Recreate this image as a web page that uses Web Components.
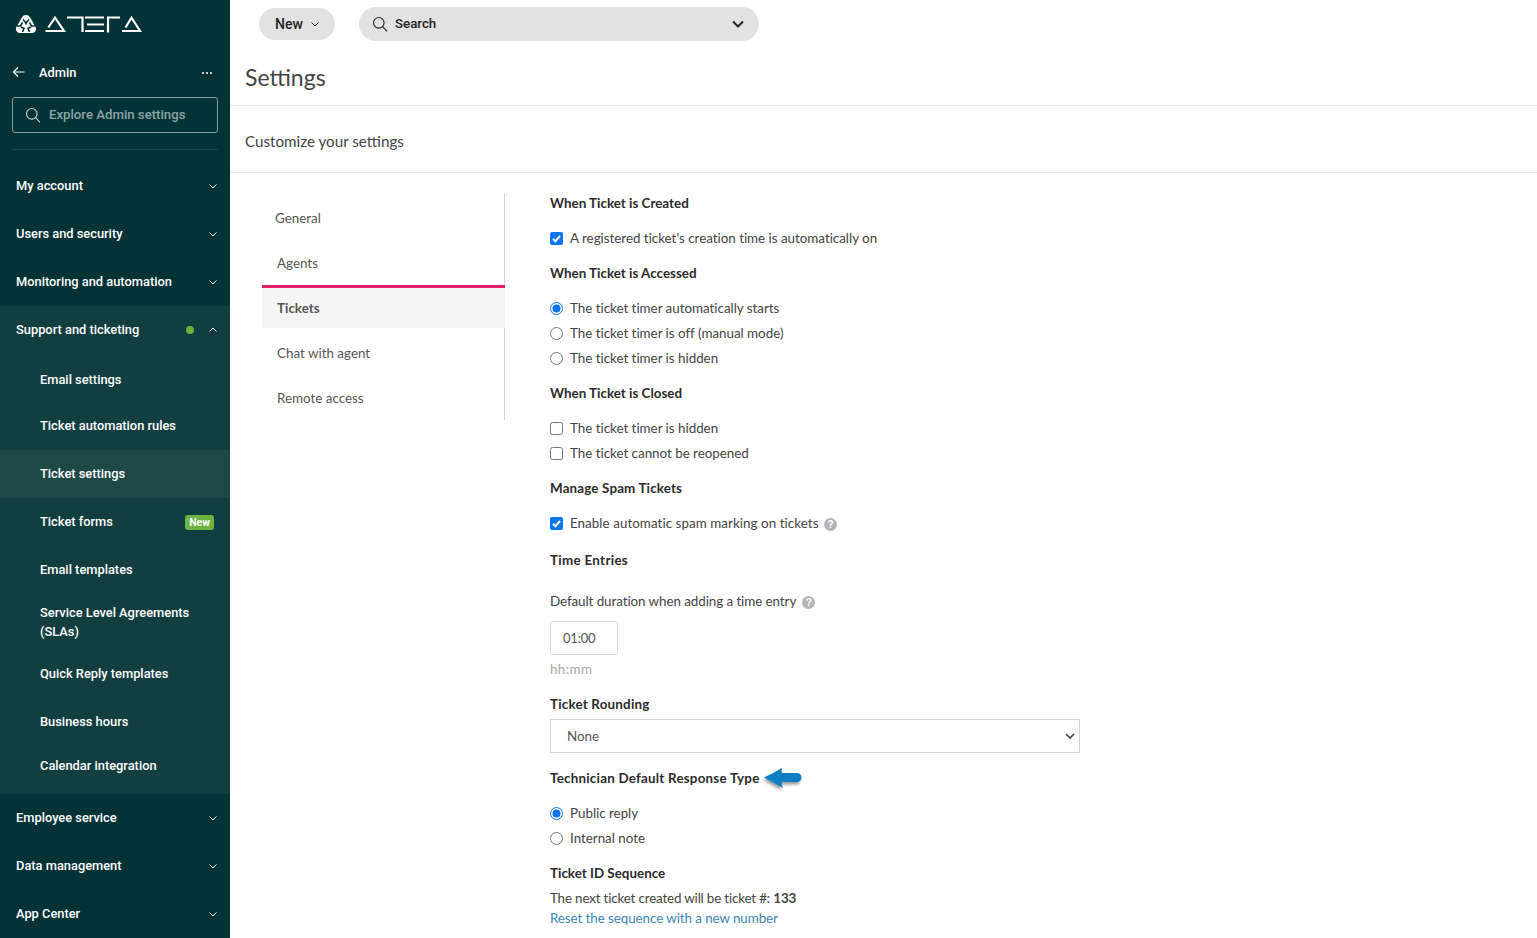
<!DOCTYPE html>
<html>
<head>
<meta charset="utf-8">
<title>Settings</title>
<style>
  html, body { margin: 0; height: 938px; overflow: hidden; background: #fff; }
  body { display: flex; font-family: "Lato", "Noto Sans", sans-serif; }
</style>
</head>
<body>
<admin-sidebar></admin-sidebar>
<settings-page></settings-page>

<script>
const chevronDown = `<svg width="10" height="10" viewBox="0 0 10 10" fill="none" stroke="currentColor" stroke-width="1"><path d="M1.5 3.500 5 7l3.500-3.500"/></svg>`;
const chevronUp = `<svg width="10" height="10" viewBox="0 0 10 10" fill="none" stroke="currentColor" stroke-width="1"><path d="M1.500 6.500 5 3l3.500 3.500"/></svg>`;
const searchIcon = `<svg width="16" height="16" viewBox="0 0 16 16" fill="none" stroke="currentColor" stroke-width="1.1"><circle cx="6.8" cy="6.8" r="5.3"/><path d="m10.700 10.700 4.300 4.600"/></svg>`;

class NavGroup extends HTMLElement {
  constructor() {
    super();
    this.attachShadow({mode: "open"});
  }
  connectedCallback() {
    const open = this.hasAttribute("open");
    this.shadowRoot.innerHTML = `
      <style>
        :host { display: block; }
        .head { height: 48px; display: flex; align-items: center; padding: 0 12px 0 16px; color: #fff; font: 500 12.85px/18px Roboto, sans-serif; }
        .label { flex: 1; }
        .dot { width: 8px; height: 8px; border-radius: 50%; background: #6cb33f; margin-right: 14px; }
        svg { display: block; }
      </style>
      <div class="head">
        <span class="label">${this.getAttribute("label")}</span>
        ${this.hasAttribute("dot") ? '<span class="dot"></span>' : ''}
        ${open ? chevronUp : chevronDown}
      </div>
      <slot></slot>`;
  }
}
customElements.define("nav-group", NavGroup);

class NavItem extends HTMLElement {
  constructor() {
    super();
    this.attachShadow({mode: "open"});
  }
  connectedCallback() {
    const h = this.getAttribute("height") || 48;
    const pb = this.getAttribute("pb") || 2;
    this.shadowRoot.innerHTML = `
      <style>
        :host { display: flex; align-items: center; height: ${h}px; padding: 0 16px ${pb}px 40px; color: #fff; font: 500 12.85px/19px Roboto, sans-serif; box-sizing: border-box; }
        :host([active]) { background: #1f4848; }
        .text { flex: 1; }
        .badge { background: #6cb33f; color: #fff; font: 700 10.5px/15px Roboto, sans-serif; padding: 0 4px; border-radius: 3px; margin-top: 2px; }
      </style>
      <span class="text"><slot></slot></span>
      ${this.hasAttribute("badge") ? `<span class="badge">${this.getAttribute("badge")}</span>` : ''}`;
  }
}
customElements.define("nav-item", NavItem);

class AdminSidebar extends HTMLElement {
  constructor() {
    super();
    this.attachShadow({mode: "open"});
    this.shadowRoot.innerHTML = `
      <style>
        :host { display: block; width: 230px; height: 938px; flex: none; background: #033237; color: #fff; overflow: hidden; }
        .logo { height: 48px; display: flex; align-items: center; padding-left: 15px; }
        .admin { height: 48px; display: flex; align-items: center; padding: 0 18px 0 12px; font: 500 12.85px Roboto, sans-serif; }
        .admin .name { flex: 1; margin-left: 13px; }
        .dots { display: flex; gap: 2px; margin-top: 2px; }
        .dots i { width: 2px; height: 2px; border-radius: 50%; background: #fff; }
        .explore { margin: 1px 12px 0; height: 36px; box-sizing: border-box; border: 1px solid #7f9d9d; border-radius: 3px; display: flex; align-items: center; gap: 8px; padding: 0 0 1px 12px; color: #8ba5a6; font: 500 13.2px Roboto, sans-serif; }
        .explore svg { color: #c5d2d2; }
        hr { border: 0; border-top: 1px solid #1c4a4c; margin: 16px 12px 12px; }
        .open { background: #123e41; padding-bottom: 8px; }
      </style>
      <div class="logo">
        <svg width="128" height="20" viewBox="0 0 128 20">
          <path d="M11 1a4.500 4.500 0 0 1 4 2.300l5.600 9.600A4 4 0 0 1 17 19H5a4 4 0 0 1-3.600-6.100L7 3.300A4.500 4.500 0 0 1 11 1z" fill="#fff"/>
          <g fill="none" stroke="#033237" stroke-width="1.6">
            <path d="M8 5.500 11 9l3-3.500"/>
            <path d="M11 9v1.500"/>
            <path d="M7.500 8.500 5.500 12H2"/>
            <path d="M14.500 8.500l2 3.500H20"/>
            <path d="M7.500 18 9 14.500 6 13"/>
            <path d="M14.500 18 13 14.500l3-1.500"/>
          </g>
          <g fill="none" stroke="#fff" stroke-width="2.200">
            <path d="M30.500 17H49L40 3.700 33.300 13.500"/>
            <path d="M52 3.500h15.500V18"/>
            <path d="M70 3.500h19M72 10.500h17M70 17h19"/>
            <path d="M93 18.500V3.500h12"/>
            <path d="M107 17h18L116.500 3.700 110.500 13.500"/>
          </g>
        </svg>
      </div>
      <div class="admin">
        <svg width="14" height="12" viewBox="0 0 14 12" fill="none" stroke="#fff" stroke-width="1.2"><path d="M12.500 6H1.500M6 1.500 1.500 6 6 10.500"/></svg>
        <span class="name">Admin</span>
        <span class="dots"><i></i><i></i><i></i></span>
      </div>
      <div class="explore">${searchIcon}<span>Explore Admin settings</span></div>
      <hr>
      <nav-group label="My account"></nav-group>
      <nav-group label="Users and security"></nav-group>
      <nav-group label="Monitoring and automation"></nav-group>
      <div class="open">
        <nav-group label="Support and ticketing" open dot>
          <nav-item height="50" pb="0">Email settings</nav-item>
          <nav-item height="46" pb="4">Ticket automation rules</nav-item>
          <nav-item active>Ticket settings</nav-item>
          <nav-item badge="New">Ticket forms</nav-item>
          <nav-item>Email templates</nav-item>
          <nav-item height="57" pb="1">Service Level Agreements (SLAs)</nav-item>
          <nav-item height="45" pb="1">Quick Reply templates</nav-item>
          <nav-item height="50" pb="0">Business hours</nav-item>
          <nav-item height="40">Calendar integration</nav-item>
        </nav-group>
      </div>
      <nav-group label="Employee service"></nav-group>
      <nav-group label="Data management"></nav-group>
      <nav-group label="App Center"></nav-group>`;
  }
}
customElements.define("admin-sidebar", AdminSidebar);

class TopBar extends HTMLElement {
  constructor() {
    super();
    this.attachShadow({mode: "open"});
    this.shadowRoot.innerHTML = `
      <style>
        :host { display: flex; align-items: center; height: 48px; padding-left: 29px; gap: 24px; font: 500 14px Roboto, sans-serif; color: #222; }
        .pill { background: #e2e2e2; display: flex; align-items: center; box-sizing: border-box; }
        .new { width: 76px; height: 32px; border-radius: 16px; padding-left: 16px; gap: 7px; }
        .search { width: 400px; height: 34px; border-radius: 17px; padding: 0 14px 0 13px; gap: 7px; font-size: 13.3px; }
        .search span { flex: 1; padding-bottom: 1px; }
        svg { display: block; }
      </style>
      <div class="pill new"><span>New</span>${chevronDown}</div>
      <div class="pill search">${searchIcon}<span>Search</span>
        <svg width="14" height="14" viewBox="0 0 14 14" fill="none" stroke="#222" stroke-width="2"><path d="m2 4.500 5 5 5-5"/></svg>
      </div>`;
  }
}
customElements.define("top-bar", TopBar);

class SideTabs extends HTMLElement {
  constructor() {
    super();
    this.attachShadow({mode: "open"});
    this.shadowRoot.innerHTML = `
      <style>
        :host { display: block; width: 243px; height: 227px; flex: none; box-sizing: border-box; border-right: 1px solid #d3d3d3; margin-left: 32px; font-size: 13.4px; color: #555; }
        div { display: flex; align-items: center; padding-left: 15px; box-sizing: border-box; }
        .general { height: 50px; padding-left: 13px; }
        .agents { height: 42px; padding-bottom: 2px; }
        .active { height: 43px; background: #f5f5f5; border-top: 3px solid #e6206f; margin-right: -1px; font-weight: 700; }
        .chat { height: 50px; }
        .remote { height: 40px; }
      </style>
      <div class="general">General</div>
      <div class="agents">Agents</div>
      <div class="active">Tickets</div>
      <div class="chat">Chat with agent</div>
      <div class="remote">Remote access</div>`;
  }
}
customElements.define("side-tabs", SideTabs);

class OptionRow extends HTMLElement {
  constructor() {
    super();
    this.attachShadow({mode: "open"});
  }
  connectedCallback() {
    const type = this.getAttribute("type");
    const on = this.hasAttribute("checked");
    let box;
    if (type === "radio") {
      box = on
        ? `<svg width="13" height="13" viewBox="0 0 13 13"><circle cx="6.500" cy="6.500" r="6" fill="#fff" stroke="#0b76ef"/><circle cx="6.500" cy="6.500" r="4" fill="#0b76ef"/></svg>`
        : `<svg width="13" height="13" viewBox="0 0 13 13"><circle cx="6.500" cy="6.500" r="6" fill="#fff" stroke="#767676"/></svg>`;
    } else {
      box = on
        ? `<svg width="13" height="13" viewBox="0 0 13 13"><rect width="13" height="13" rx="2" fill="#0b76ef"/><path d="m3 6.800 2.400 2.400L10 4" fill="none" stroke="#fff" stroke-width="2"/></svg>`
        : `<svg width="13" height="13" viewBox="0 0 13 13"><rect x=".5" y=".5" width="12" height="12" rx="2" fill="#fff" stroke="#767676"/></svg>`;
    }
    this.shadowRoot.innerHTML = `
      <style>
        :host { display: flex; align-items: center; gap: 7px; height: 25px; font-size: 13.4px; letter-spacing: -.02px; color: #444; }
        svg { display: block; flex: none; margin-top: 1px; }
      </style>
      ${box}<span><slot></slot></span>`;
  }
}
customElements.define("option-row", OptionRow);

class HelpDot extends HTMLElement {
  constructor() {
    super();
    this.attachShadow({mode: "open"});
    this.shadowRoot.innerHTML = `
      <style>
        :host { display: inline-flex; width: 13px; height: 13px; border-radius: 50%; background: #b5b5b5; color: #fff; font: 700 10px/13px "Liberation Sans", sans-serif; letter-spacing: 0; justify-content: center; margin-left: 2px; vertical-align: 0; }
      </style>?`;
  }
}
customElements.define("help-dot", HelpDot);

class SectionTitle extends HTMLElement {
  constructor() {
    super();
    this.attachShadow({mode: "open"});
    this.shadowRoot.innerHTML = `
      <style>
        :host { display: flex; align-items: center; height: 20px; font-size: 13.4px; line-height: 20px; font-weight: 700; color: #2b2b2b; }
      </style>
      <slot></slot>`;
  }
}
customElements.define("section-title", SectionTitle);

class TicketForm extends HTMLElement {
  constructor() {
    super();
    this.attachShadow({mode: "open"});
    this.shadowRoot.innerHTML = `
      <style>
        :host { display: block; flex: 1; margin-left: 45px; font-size: 13.4px; color: #444; }
        .plain { display: block; height: 20px; line-height: 20px; }
        .time { width: 68px; height: 34px; box-sizing: border-box; border: 1px solid #d6d6d6; border-radius: 3px; padding-left: 12px; display: flex; align-items: center; margin-top: 10px; color: #555; font-size: 13px; letter-spacing: -.2px; }
        .hint { color: #a8a8a8; margin-top: 4px; line-height: 20px; letter-spacing: .4px; }
        .select { width: 530px; height: 34px; box-sizing: border-box; border: 1px solid #d2d2d2; display: flex; align-items: center; justify-content: space-between; padding: 0 4px 0 16px; color: #555; margin-top: 5px; }
        a { color: #3b87b5; text-decoration: none; line-height: 20px; display: block; letter-spacing: -.08px; }
      </style>
      <section-title>When Ticket is Created</section-title>
      <option-row type="checkbox" checked style="margin-top:12px">A registered ticket's creation time is automatically on</option-row>
      <section-title style="margin-top:13px">When Ticket is Accessed</section-title>
      <option-row type="radio" checked style="margin-top:12px">The ticket timer automatically starts</option-row>
      <option-row type="radio">The ticket timer is off (manual mode)</option-row>
      <option-row type="radio">The ticket timer is hidden</option-row>
      <section-title style="margin-top:13px">When Ticket is Closed</section-title>
      <option-row type="checkbox" style="margin-top:12px">The ticket timer is hidden</option-row>
      <option-row type="checkbox">The ticket cannot be reopened</option-row>
      <section-title style="margin-top:13px;letter-spacing:.15px">Manage Spam Tickets</section-title>
      <option-row type="checkbox" checked style="margin-top:12px;letter-spacing:.05px">Enable automatic spam marking on tickets <help-dot></help-dot></option-row>
      <section-title style="margin-top:15px;letter-spacing:.3px">Time Entries</section-title>
      <div class="plain" style="margin-top:21px;letter-spacing:-.07px">Default duration when adding a time entry <help-dot style="margin-left:3px"></help-dot></div>
      <div class="time">01:00</div>
      <div class="hint">hh:mm</div>
      <section-title style="margin-top:15px;letter-spacing:.2px">Ticket Rounding</section-title>
      <div class="select"><span>None</span>
        <svg width="10" height="7" viewBox="0 0 10 7" fill="none" stroke="#444" stroke-width="1.6"><path d="m1 1 4 4 4-4"/></svg>
      </div>
      <section-title style="margin-top:15px;letter-spacing:.22px">Technician Default Response Type
        <svg width="38" height="20" viewBox="0 0 38 20" style="margin-left:4px;overflow:visible">
          <defs><filter id="s" x="-20%" y="-40%" width="140%" height="200%"><feDropShadow dx="-1" dy="2.500" stdDeviation="1.500" flood-color="#000" flood-opacity=".4"/></filter></defs>
          <path d="M0 9.500Q10 5 18 0q-1 3 0 5h15a4.500 4.500 0 0 1 0 9H18q-1 3 1 6Q10 15 0 9.500z" fill="#0b7ec2" filter="url(#s)"/>
        </svg>
      </section-title>
      <option-row type="radio" checked style="margin-top:12px">Public reply</option-row>
      <option-row type="radio">Internal note</option-row>
      <section-title style="margin-top:13px">Ticket ID Sequence</section-title>
      <div class="plain" style="margin-top:5px;letter-spacing:-.17px">The next ticket created will be ticket #: <b>133</b></div>
      <a href="#">Reset the sequence with a new number</a>`;
  }
}
customElements.define("ticket-form", TicketForm);

class SettingsPage extends HTMLElement {
  constructor() {
    super();
    this.attachShadow({mode: "open"});
    this.shadowRoot.innerHTML = `
      <style>
        :host { display: block; flex: 1; min-width: 0; height: 938px; overflow: hidden; color: #444; }
        h1 { margin: 0; height: 58px; box-sizing: border-box; padding: 12px 0 0 15px; font-size: 23px; font-weight: 400; line-height: 34px; border-bottom: 1px solid #e4e4e4; color: #444; }
        h2 { margin: 0; height: 67px; box-sizing: border-box; padding: 24px 0 0 15px; font-size: 15.2px; font-weight: 400; line-height: 22px; border-bottom: 1px solid #e8e8e8; color: #444; }
        .body { display: flex; padding-top: 20px; }
      </style>
      <top-bar></top-bar>
      <h1>Settings</h1>
      <h2>Customize your settings</h2>
      <div class="body">
        <side-tabs></side-tabs>
        <ticket-form></ticket-form>
      </div>`;
  }
}
customElements.define("settings-page", SettingsPage);
</script>
</body>
</html>
